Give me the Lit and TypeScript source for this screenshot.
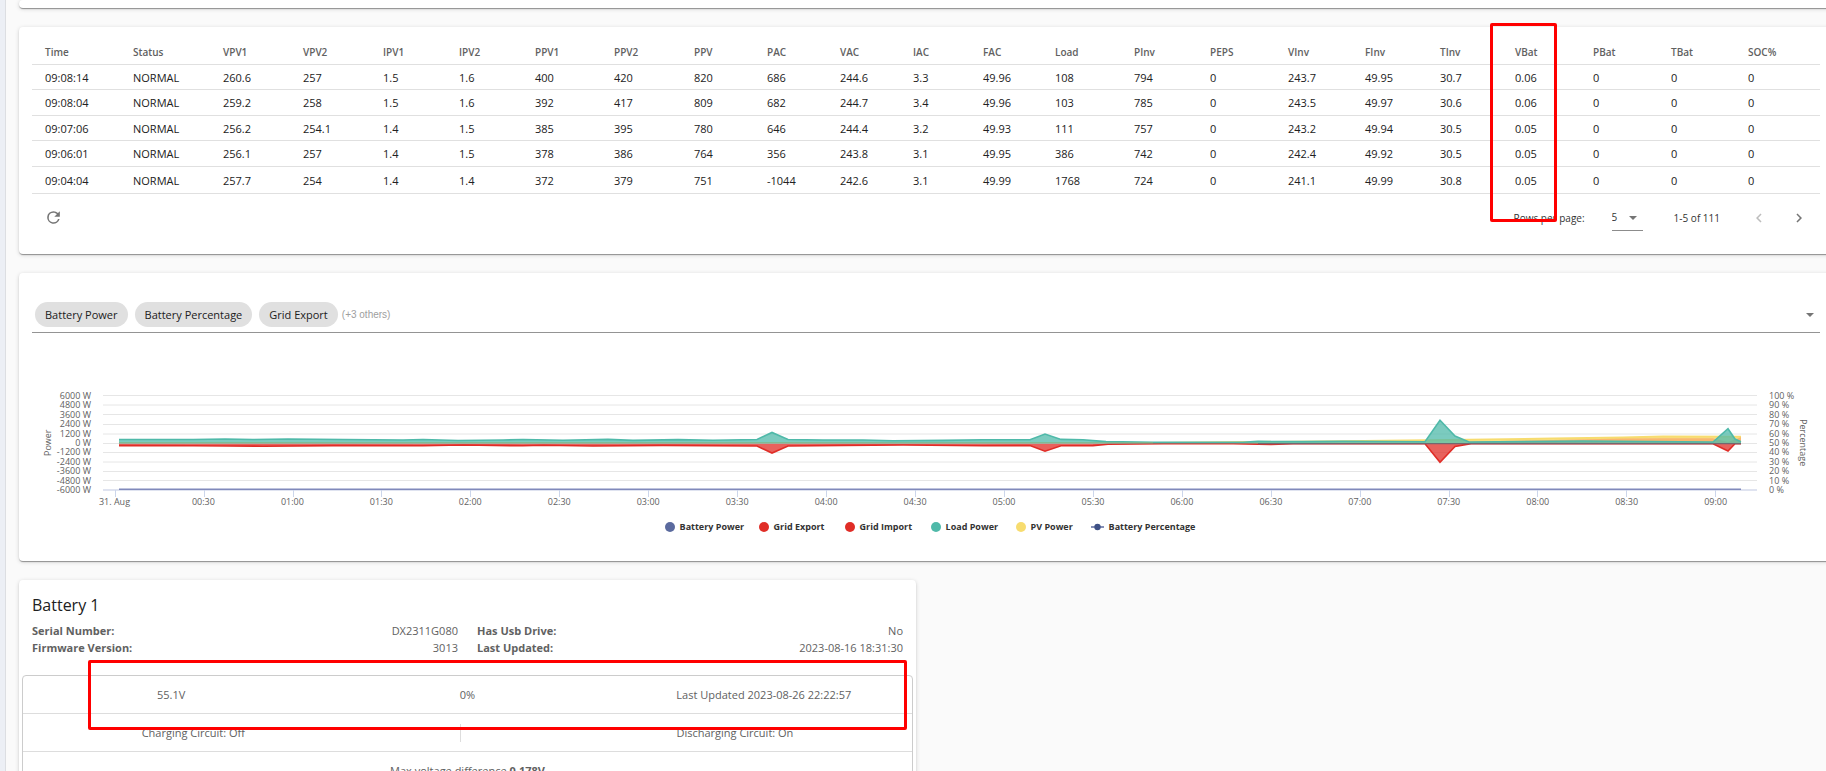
import { LitElement, html, svg, css } from "lit";
import { customElement, property } from "lit/decorators.js";

const COLUMNS: [string, number][] = [
  ["Time", 88], ["Status", 90], ["VPV1", 80], ["VPV2", 80], ["IPV1", 76], ["IPV2", 76],
  ["PPV1", 79], ["PPV2", 80], ["PPV", 73], ["PAC", 73], ["VAC", 73], ["IAC", 70],
  ["FAC", 72], ["Load", 79], ["PInv", 76], ["PEPS", 78], ["VInv", 77], ["FInv", 75],
  ["TInv", 75], ["VBat", 78], ["PBat", 78], ["TBat", 77], ["SOC%", 85],
];
const ROWS = [
  "09:08:14 NORMAL 260.6 257 1.5 1.6 400 420 820 686 244.6 3.3 49.96 108 794 0 243.7 49.95 30.7 0.06 0 0 0",
  "09:08:04 NORMAL 259.2 258 1.5 1.6 392 417 809 682 244.7 3.4 49.96 103 785 0 243.5 49.97 30.6 0.06 0 0 0",
  "09:07:06 NORMAL 256.2 254.1 1.4 1.5 385 395 780 646 244.4 3.2 49.93 111 757 0 243.2 49.94 30.5 0.05 0 0 0",
  "09:06:01 NORMAL 256.1 257 1.4 1.5 378 386 764 356 243.8 3.1 49.95 386 742 0 242.4 49.92 30.5 0.05 0 0 0",
  "09:04:04 NORMAL 257.7 254 1.4 1.4 372 379 751 -1044 242.6 3.1 49.99 1768 724 0 241.1 49.99 30.8 0.05 0 0 0",
].map((r) => r.split(" "));

const POWER = ["6000 W", "4800 W", "3600 W", "2400 W", "1200 W", "0 W", "-1200 W", "-2400 W", "-3600 W", "-4800 W", "-6000 W"];
const PERCENT = ["100 %", "90 %", "80 %", "70 %", "60 %", "50 %", "40 %", "30 %", "20 %", "10 %", "0 %"];
const TIMES = ["31. Aug", "00:30", "01:00", "01:30", "02:00", "02:30", "03:00", "03:30", "04:00", "04:30",
  "05:00", "05:30", "06:00", "06:30", "07:00", "07:30", "08:00", "08:30", "09:00"];

@customElement("readings-table")
class ReadingsTable extends LitElement {
  static styles = css`
    :host { display: block; }
    table { width: 100%; border-collapse: collapse; table-layout: fixed; font-size: 11px; color: #212121; }
    th { height: 24px; padding: 0 0 0 13px; text-align: left; font-size: 10px; font-weight: 600; color: #616161; }
    td { height: 24px; padding: 0 0 0 13px; white-space: nowrap; }
    tr:nth-child(even) td { height: 25px; }
    tbody tr:last-child td { height: 26px; }
    tr { border-bottom: 1px solid #e0e0e0; }
    .footer { display: flex; align-items: center; height: 47px; padding: 0 12px 0 12px; font-size: 10px; color: #333; }
    .icon { display: flex; padding: 0; border: 0; background: none; color: #757575; font: inherit; }
    .icon[disabled] { color: #bdbdbd; }
    .spacer { flex: 1; }
    .picker { display: flex; align-items: center; gap: 27px; }
    .field { position: relative; display: flex; width: 31px; height: 25px; border-bottom: 1px solid #8c8c8c; }
    select { appearance: none; width: 100%; border: 0; padding: 0; background: none; font: inherit; font-size: 10px; color: inherit; outline: none; }
    .caret { position: absolute; right: 6px; top: 11px; border: 4px solid transparent; border-top-color: #757575; border-bottom: 0; pointer-events: none; }
    .range { margin: 0 30px 0 31px; }
    .next { margin-left: 22px; }
  `;
  render() {
    return html`
      <table>
        <colgroup>${COLUMNS.map(([, w]) => html`<col style="width:${w}px" />`)}</colgroup>
        <thead><tr>${COLUMNS.map(([name]) => html`<th scope="col">${name}</th>`)}</tr></thead>
        <tbody>${ROWS.map((r) => html`<tr>${r.map((v) => html`<td>${v}</td>`)}</tr>`)}</tbody>
      </table>
      <div class="footer">
        <button class="icon" aria-label="Refresh">
          <svg width="19" height="19" viewBox="0 0 24 24" fill="currentColor"><path d="M17.65 6.35A7.95 7.95 0 0 0 12 4a8 8 0 1 0 7.73 10h-2.08A6 6 0 1 1 12 6c1.66 0 3.14.69 4.22 1.78L13 11h7V4z" /></svg>
        </button>
        <span class="spacer"></span>
        <div class="picker">
          <label for="rows">Rows per page:</label>
          <div class="field">
            <select id="rows"><option selected>5</option><option>10</option><option>25</option></select>
            <i class="caret"></i>
          </div>
        </div>
        <span class="range">1-5 of 111</span>
        <button class="icon" aria-label="Previous page" disabled>
          <svg width="18" height="18" viewBox="0 0 24 24" fill="currentColor"><path d="M15.41 7.41 14 6l-6 6 6 6 1.41-1.41L10.83 12z" /></svg>
        </button>
        <button class="icon next" aria-label="Next page">
          <svg width="18" height="18" viewBox="0 0 24 24" fill="currentColor"><path d="M8.59 7.41 10 6l6 6-6 6-1.41-1.41L13.17 12z" /></svg>
        </button>
      </div>
    `;
  }
}

/* Points share one space: 1654 wide, 48.5 is the zero line, 95 the floor. */
const LOAD: [number, number][] = [
  [16, 44.5], [90, 44.5], [122, 44], [150, 44.5], [185, 44], [240, 44.5], [300, 45], [320, 44.5], [355, 45.5], [400, 45],
  [420, 44.5], [460, 45.2], [505, 44.4], [530, 45.4], [575, 44.6], [610, 45.2], [654, 44.5], [669, 37.5], [685, 44.5],
  [720, 45], [760, 45], [790, 45.8], [840, 45.4], [880, 44.8], [927, 44.8], [942, 39], [958, 44.4], [980, 44.8],
  [1003, 46.6], [1050, 47.3], [1140, 47.3], [1155, 46.4], [1200, 46.6], [1240, 46.2], [1322, 46.8], [1337, 25.3],
  [1352, 41], [1366, 47], [1480, 46], [1610, 47], [1625, 33.7], [1632, 44], [1638, 46.8],
];
const GRID: [number, number][] = [
  [16, 50.6], [90, 50.8], [125, 51], [160, 51.2], [230, 50.6], [320, 50.8], [360, 50], [420, 50.8], [440, 50.2],
  [490, 51], [560, 50.4], [654, 51], [669, 58], [685, 51], [740, 50.4], [800, 50], [880, 50.8], [927, 50.6], [942, 56.2],
  [958, 50.8], [990, 50.6], [1005, 49.2], [1060, 48.8], [1130, 48.8], [1168, 49.4], [1190, 48.8], [1322, 48.8],
  [1337, 67.2], [1352, 51.5], [1368, 48.6], [1610, 48.8], [1625, 56], [1632, 48.8], [1638, 48.8],
];
const PV: [number, number][] = [[1050, 48], [1240, 46.2], [1366, 44.8], [1450, 43.6], [1520, 42.4], [1560, 41.6], [1638, 41.8]];
const EXPORT: [number, number][] = [[1366, 46.4], [1450, 45], [1520, 43.6], [1560, 43.2], [1610, 43.2], [1625, 47], [1638, 42.2]];
const LINES = [0.5, 10, 19.5, 29.5, 39, 48.5, 57.5, 67, 76.5, 85.5];
const path = (p: [number, number][]) => p.map(([x, y], i) => `${i ? "L" : "M"}${x} ${y}`).join("");
const area = (p: [number, number][]) => `${path(p)}L${p[p.length - 1][0]} 48.5L${p[0][0]} 48.5Z`;

@customElement("power-chart")
class PowerChart extends LitElement {
  static styles = css`
    :host { display: block; font-size: 9px; color: #616161; }
    .body { display: grid; grid-template-columns: 23px 36px 1fr 37px 16px; padding-right: 10px; }
    .title { writing-mode: vertical-rl; text-align: center; height: 103px; line-height: 14px; margin-top: -4px; justify-self: end; }
    .left { transform: rotate(180deg); }
    .scale { display: flex; flex-direction: column; justify-content: space-between; height: 103px; line-height: 9px; margin-top: -4px; white-space: nowrap; }
    .power { text-align: right; }
    .percent { padding-left: 12px; }
    .plot { margin-left: 12px; min-width: 0; }
    .plot svg { display: block; width: 100%; height: 102px; }
    .plot path { vector-effect: non-scaling-stroke; }
    .times { display: flex; margin: 0 -3px 0 -33px; line-height: 10px; }
    .times span { flex: 1 1 0; text-align: center; white-space: nowrap; }
    .legend { display: grid; grid-template-columns: 94px 86px 86px 85px 75px auto; justify-content: center; margin: 14px 0 0 8px; padding: 0; list-style: none; font-weight: 700; color: #333; line-height: 12px; }
    .legend li { display: flex; align-items: center; gap: 5px; white-space: nowrap; }
  `;
  private dot(color: string) {
    return html`<svg width="10" height="10"><circle cx="5" cy="5" r="5" fill=${color} /></svg>`;
  }
  render() {
    return html`
      <div class="body">
        <div class="title left">Power</div>
        <div class="scale power">${POWER.map((t) => html`<span>${t}</span>`)}</div>
        <div class="plot">
          <svg viewBox="0 0 1654 102" preserveAspectRatio="none" fill="none" role="img" aria-label="Power and battery percentage over time">
            ${LINES.map((y) => svg`<path d="M0 ${y}H1654" stroke="#e6e6e6" stroke-width="1" />`)}
            <path d="M0 95H1654" stroke="#dfe3f0" stroke-width="2" />
            ${TIMES.map((_, i) => svg`<path d="M${Math.round(11.7 + i * 88.92) + 0.5} 95V102" stroke="#ccd6eb" />`)}
            <path d="M16 94.3H1638" stroke="#8089bb" stroke-width="1.4" />
            <path d=${area(PV)} fill="#f7d96b" fill-opacity=".75" />
            <path d=${path(PV)} stroke="#f7dc6f" stroke-width="2" />
            <path d=${area(EXPORT)} fill="#f98b4b" fill-opacity=".5" />
            <path d=${area(GRID)} fill="#e02d27" fill-opacity=".75" />
            <path d=${path(GRID)} stroke="#e02d27" stroke-width="1.6" />
            <path d=${area(LOAD)} fill="#4fb9a9" fill-opacity=".75" />
            <path d=${path(LOAD)} stroke="#4fb9a9" stroke-width="1.6" />
            <path d="M16 47.7H1050" stroke="#7fb98b" stroke-width="1" />
            <path d="M1155 48.7H1638" stroke="#736870" stroke-width="1.2" />
          </svg>
          <div class="times">${TIMES.map((t) => html`<span>${t}</span>`)}</div>
        </div>
        <div class="scale percent">${PERCENT.map((t) => html`<span>${t}</span>`)}</div>
        <div class="title">Percentage</div>
      </div>
      <ul class="legend">
        <li>${this.dot("#5b6a9e")}Battery Power</li>
        <li>${this.dot("#e02d27")}Grid Export</li>
        <li>${this.dot("#e02d27")}Grid Import</li>
        <li>${this.dot("#4fb9a9")}Load Power</li>
        <li>${this.dot("#f7dc6f")}PV Power</li>
        <li><svg width="13" height="8"><path d="M0 4H13" stroke="#5b6a9e" stroke-width="1.5" /><circle cx="6.5" cy="4" r="3.2" fill="#3f5186" /></svg>Battery Percentage</li>
      </ul>
    `;
  }
}

@customElement("battery-panel")
class BatteryPanel extends LitElement {
  @property() name = "Battery 1";
  static styles = css`
    :host { display: block; font-size: 11px; color: #616161; }
    h2 { margin: 0; padding: 13px 13px 0; font-size: 16px; line-height: 24px; font-weight: 400; color: #212121; }
    .facts { display: grid; grid-template-columns: 1fr 1fr; column-gap: 19px; margin: 5px 13px 0; line-height: 17px; }
    .facts div { display: flex; justify-content: space-between; }
    dt { font-weight: 700; }
    dd { margin: 0; }
    .box { margin: 19px 3px 0; border: 1px solid #ccc; border-radius: 4px; }
    .row { display: grid; grid-template-columns: repeat(3, 1fr); align-items: center; height: 37px; text-align: center; border-bottom: 1px solid #ddd; }
    .row.split { display: flex; justify-content: space-around; padding: 0 11px; }
    .row.one { display: block; line-height: 37px; }
    .bar { width: 1px; height: 18px; background: #ddd; }
  `;
  render() {
    return html`
      <h2>${this.name}</h2>
      <dl class="facts">
        <div><dt>Serial Number:</dt><dd>DX2311G080</dd></div>
        <div><dt>Has Usb Drive:</dt><dd>No</dd></div>
        <div><dt>Firmware Version:</dt><dd>3013</dd></div>
        <div><dt>Last Updated:</dt><dd>2023-08-16 18:31:30</dd></div>
      </dl>
      <div class="box">
        <div class="row"><span>55.1V</span><span>0%</span><span>Last Updated 2023-08-26 22:22:57</span></div>
        <div class="row split"><span>Charging Circuit: Off</span><i class="bar"></i><span>Discharging Circuit: On</span></div>
        <div class="row one">Max voltage difference <b>0.178V</b></div>
      </div>
    `;
  }
}

@customElement("app-root")
class AppRoot extends LitElement {
  static styles = css`
    :host { display: flex; height: 100vh; overflow: hidden; background: #fafafa; font-family: "Open Sans", "Noto Sans", sans-serif; }
    .rail { flex: none; width: 5px; background: #eceff5; border-right: 1px solid #dcdee2; }
    main { flex: 1; min-width: 0; display: flex; flex-direction: column; gap: 19px; margin: 0 -7px 0 13px; }
    .card { position: relative; flex: none; background: #fff; border-radius: 4px;
      box-shadow: 0 1px 4px rgba(0, 0, 0, .16), 0 1px 1px rgba(0, 0, 0, .2), 0 2px 1px -1px rgba(0, 0, 0, .2); }
    .tail { height: 8px; }
    .table { padding: 13px; }
    .chart { padding: 24px 13px 28px; }
    .filter { display: flex; align-items: center; gap: 7px; width: 100%; height: 36px; padding: 0 6px 0 3px; border: 0;
      border-bottom: 1px solid #949494; background: none; font: inherit; text-align: left; }
    .chip { height: 25px; line-height: 25px; padding: 0 10px; border-radius: 13px; background: #e0e0e0; font-size: 11px; color: #212121; }
    .more { flex: 1; margin-left: -3px; font-family: "Liberation Sans", sans-serif; font-size: 10px; color: #9e9e9e; }
    .caret { border: 4px solid transparent; border-top-color: #757575; border-bottom: 0; }
    .chart power-chart { margin-top: 62px; }
    .battery { width: calc(50% - 10px); height: 400px; }
    .mark { position: absolute; box-sizing: border-box; border: 3px solid #f00; border-radius: 2px; pointer-events: none; }
    .mark.vbat { left: calc(81% + 2px); width: 67px; top: -4px; height: 199px; }
    .mark.level { left: 69px; right: 9px; top: 80px; height: 70px; }
  `;
  render() {
    return html`
      <div class="rail"></div>
      <main>
        <section class="card tail"></section>
        <section class="card table">
          <readings-table></readings-table>
          <div class="mark vbat"></div>
        </section>
        <section class="card chart">
          <button class="filter" aria-haspopup="listbox">
            <span class="chip">Battery Power</span><span class="chip">Battery Percentage</span><span class="chip">Grid Export</span>
            <span class="more">(+3 others)</span><i class="caret"></i>
          </button>
          <power-chart></power-chart>
        </section>
        <section class="card battery">
          <battery-panel></battery-panel>
          <div class="mark level"></div>
        </section>
      </main>
    `;
  }
}
